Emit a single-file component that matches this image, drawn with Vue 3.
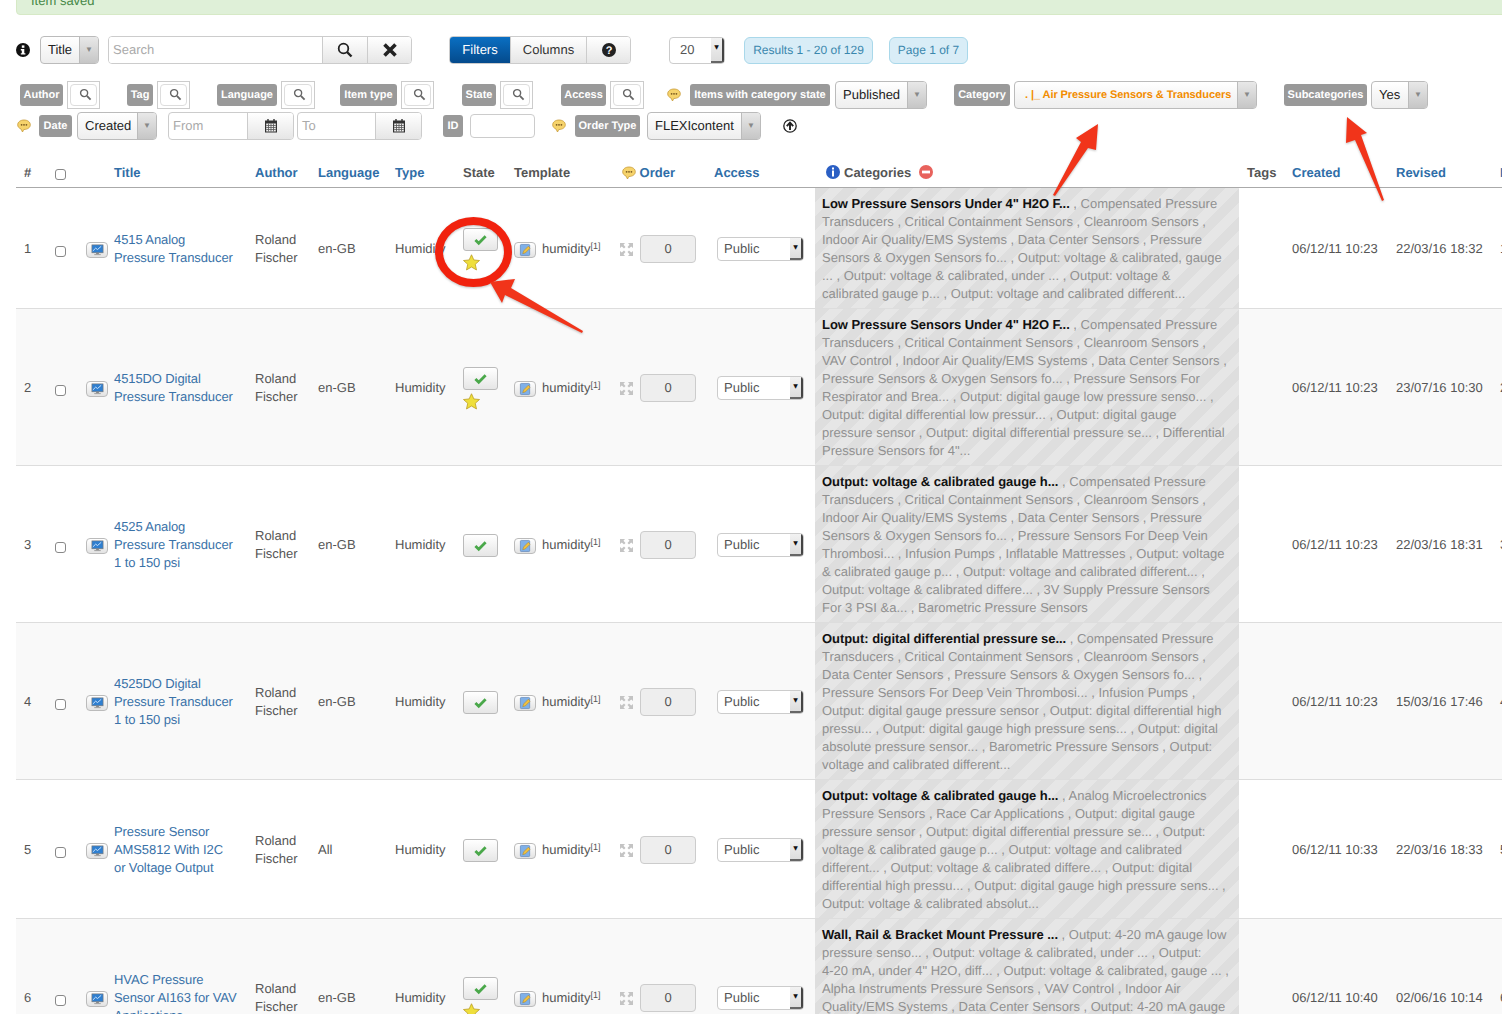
<script setup>
const row2 = [
  { t: 'label', text: 'Author', w: 43, ml: 4 }, { t: 'sbox', w: 33, ml: 4 },
  { t: 'label', text: 'Tag', w: 26, ml: 27 }, { t: 'sbox', w: 33, ml: 4 },
  { t: 'label', text: 'Language', w: 60, ml: 27 }, { t: 'sbox', w: 34, ml: 4 },
  { t: 'label', text: 'Item type', w: 57, ml: 25 }, { t: 'sbox', w: 33, ml: 4 },
  { t: 'label', text: 'State', w: 34, ml: 28 }, { t: 'sbox', w: 33, ml: 4 },
  { t: 'label', text: 'Access', w: 45, ml: 28 }, { t: 'sbox', w: 34, ml: 4 },
  { t: 'chat', w: 14, ml: 23 },
  { t: 'label', text: 'Items with category state', w: 140, ml: 9 },
  { t: 'sel', text: 'Published', w: 92, ml: 5 },
  { t: 'label', text: 'Category', w: 56, ml: 27 },
  { t: 'sel', text: '. |_ Air Pressure Sensors & Transducers', w: 243, ml: 4, cat: true },
  { t: 'label', text: 'Subcategories', w: 83, ml: 27 },
  { t: 'sel', text: 'Yes', w: 57, ml: 4 }
]
const row3 = [
  { t: 'chat', w: 14, ml: 1 },
  { t: 'label', text: 'Date', w: 33, ml: 8 },
  { t: 'sel', text: 'Created', w: 80, ml: 5 },
  { t: 'date', text: 'From', w: 126, ml: 11 },
  { t: 'date', text: 'To', w: 125, ml: 3 },
  { t: 'label', text: 'ID', w: 20, ml: 21 },
  { t: 'input', w: 65, ml: 7 },
  { t: 'chat', w: 14, ml: 17 },
  { t: 'label', text: 'Order Type', w: 65, ml: 9 },
  { t: 'sel', text: 'FLEXIcontent', w: 114, ml: 7 },
  { t: 'up', w: 14, ml: 22 }
]
const rows = [
  { n: 1, title: ['4515 Analog', 'Pressure Transducer'], lang: 'en-GB', star: true, created: '06/12/11 10:23', revised: '22/03/16 18:32',
    bold: 'Low Pressure Sensors Under 4" H2O F...',
    rest: ' , Compensated Pressure Transducers , Critical Containment Sensors , Cleanroom Sensors , Indoor Air Quality/EMS Systems , Data Center Sensors , Pressure Sensors & Oxygen Sensors fo... , Output: voltage & calibrated, gauge ... , Output: voltage & calibrated, under ... , Output: voltage & calibrated gauge p... , Output: voltage and calibrated different...' },
  { n: 2, title: ['4515DO Digital', 'Pressure Transducer'], lang: 'en-GB', star: true, created: '06/12/11 10:23', revised: '23/07/16 10:30',
    bold: 'Low Pressure Sensors Under 4" H2O F...',
    rest: ' , Compensated Pressure Transducers , Critical Containment Sensors , Cleanroom Sensors , VAV Control , Indoor Air Quality/EMS Systems , Data Center Sensors , Pressure Sensors & Oxygen Sensors fo... , Pressure Sensors For Respirator and Brea... , Output: digital gauge low pressure senso... , Output: digital differential low pressur... , Output: digital gauge pressure sensor , Output: digital differential pressure se... , Differential Pressure Sensors for 4"...' },
  { n: 3, title: ['4525 Analog', 'Pressure Transducer', '1 to 150 psi'], lang: 'en-GB', star: false, created: '06/12/11 10:23', revised: '22/03/16 18:31',
    bold: 'Output: voltage & calibrated gauge h...',
    rest: ' , Compensated Pressure Transducers , Critical Containment Sensors , Cleanroom Sensors , Indoor Air Quality/EMS Systems , Data Center Sensors , Pressure Sensors & Oxygen Sensors fo... , Pressure Sensors For Deep Vein Thrombosi... , Infusion Pumps , Inflatable Mattresses , Output: voltage & calibrated gauge p... , Output: voltage and calibrated different... , Output: voltage & calibrated differe... , 3V Supply Pressure Sensors For 3 PSI &a... , Barometric Pressure Sensors' },
  { n: 4, title: ['4525DO Digital', 'Pressure Transducer', '1 to 150 psi'], lang: 'en-GB', star: false, created: '06/12/11 10:23', revised: '15/03/16 17:46',
    bold: 'Output: digital differential pressure se...',
    rest: ' , Compensated Pressure Transducers , Critical Containment Sensors , Cleanroom Sensors , Data Center Sensors , Pressure Sensors & Oxygen Sensors fo... , Pressure Sensors For Deep Vein Thrombosi... , Infusion Pumps , Output: digital gauge pressure sensor , Output: digital differential high pressu... , Output: digital gauge high pressure sens... , Output: digital absolute pressure sensor... , Barometric Pressure Sensors , Output: voltage and calibrated different...' },
  { n: 5, title: ['Pressure Sensor', 'AMS5812 With I2C', 'or Voltage Output'], lang: 'All', star: false, created: '06/12/11 10:33', revised: '22/03/16 18:33',
    bold: 'Output: voltage & calibrated gauge h...',
    rest: ' , Analog Microelectronics Pressure Sensors , Race Car Applications , Output: digital gauge pressure sensor , Output: digital differential pressure se... , Output: voltage & calibrated gauge p... , Output: voltage and calibrated different... , Output: voltage & calibrated differe... , Output: digital differential high pressu... , Output: digital gauge high pressure sens... , Output: voltage & calibrated absolut...' },
  { n: 6, title: ['HVAC Pressure', 'Sensor AI163 for VAV', 'Applications'], lang: 'en-GB', star: true, created: '06/12/11 10:40', revised: '02/06/16 10:14',
    bold: 'Wall, Rail & Bracket Mount Pressure ...',
    rest: ' , Output: 4-20 mA gauge low pressure senso... , Output: voltage & calibrated, under ... , Output: 4-\u206020 mA, under 4" H2O, diff... , Output: voltage & calibrated, gauge ... , Alpha Instruments Pressure Sensors , VAV Control , Indoor Air Quality/EMS Systems , Data Center Sensors , Output: 4-20 mA gauge pressure sensor , Output: voltage and calibrated different... , Output: voltage & calibrated differe... , Barometric Pressure Sensors , Output: voltage & calibrated' }
]
</script>

<template>
  <div class="page">
    <div class="alert">Item saved</div>

    <div class="bar bar1">
      <svg class="ico14" viewBox="0 0 14 14"><circle cx="7" cy="7" r="7" fill="#111"/><rect x="5.800" y="2.400" width="2.600" height="2.400" fill="#fff"/><path d="M4.800 6h3.500v4.200h1.100v1.400H4.800v-1.400h1V7.400h-1z" fill="#fff"/></svg>
      <div class="sel title-sel"><span class="sel-text">Title</span><span class="sel-arrow">▼</span></div>
      <div class="group search-group">
        <span class="search-ph">Search</span>
        <span class="btn w45"><svg class="ico16" viewBox="0 0 16 16"><circle cx="6.500" cy="6.500" r="4.800" fill="none" stroke="#222" stroke-width="1.800"/><path d="M10 10l4.500 4.500" stroke="#222" stroke-width="2.400"/></svg></span>
        <span class="btn w44"><svg class="ico16" viewBox="0 0 16 16"><path d="M2.500 2.500l11 11M13.500 2.500l-11 11" stroke="#222" stroke-width="3.600"/></svg></span>
      </div>
      <div class="group filter-group">
        <span class="btn primary w60">Filters</span>
        <span class="btn w76">Columns</span>
        <span class="btn w46"><svg class="ico14" viewBox="0 0 14 14"><circle cx="7" cy="7" r="7" fill="#222"/><text x="7" y="11" text-anchor="middle" class="q">?</text></svg></span>
      </div>
      <div class="native limit"><span>20</span><i class="native-arrow">▼</i></div>
      <span class="info results">Results 1 - 20 of 129</span>
      <span class="info pagei">Page 1 of 7</span>
    </div>

    <div v-for="(list, li) in [row2, row3]" :key="li" class="bar" :class="li ? 'bar3' : 'bar2'">
      <template v-for="(it, i) in list" :key="i">
        <span v-if="it.t === 'label'" class="label" :style="{ width: it.w + 'px', marginLeft: it.ml + 'px' }">{{ it.text }}</span>
        <span v-else-if="it.t === 'sbox'" class="sbox" :style="{ width: it.w + 'px', marginLeft: it.ml + 'px' }">
          <span class="sbox-in"><svg class="ico13" viewBox="0 0 14 14"><circle cx="5.500" cy="5.500" r="3.800" fill="none" stroke="#666" stroke-width="1.500"/><path d="M8.500 8.500l4 4" stroke="#666" stroke-width="2"/></svg></span>
        </span>
        <svg v-else-if="it.t === 'chat'" class="chat" :style="{ marginLeft: it.ml + 'px' }" viewBox="0 0 14 14"><path d="M7 1C3.400 1 .7 3 .7 5.800c0 2 1.300 3.400 3.300 4.200l1.500 3 1.300-2.500c3.800 0 6.500-2 6.500-4.700C13.300 3 10.600 1 7 1z" fill="#f6d36b" stroke="#c79a3a" stroke-width=".8"/><circle cx="4.600" cy="5.800" r=".9" fill="#7a5a20"/><circle cx="7" cy="5.800" r=".9" fill="#7a5a20"/><circle cx="9.400" cy="5.800" r=".9" fill="#7a5a20"/></svg>
        <div v-else-if="it.t === 'sel'" class="sel" :style="{ width: it.w + 'px', marginLeft: it.ml + 'px' }"><span class="sel-text" :class="{ cat: it.cat }">{{ it.text }}</span><span class="sel-arrow">▼</span></div>
        <div v-else-if="it.t === 'date'" class="date" :style="{ width: it.w + 'px', marginLeft: it.ml + 'px' }">
          <span class="date-ph">{{ it.text }}</span>
          <span class="date-btn"><svg class="ico14" viewBox="0 0 14 14"><rect x="1" y="1.500" width="12" height="12" fill="#333"/><rect x="2.200" y="4.500" width="9.600" height="8" fill="#eee"/><path d="M2.200 6.500h9.600M2.200 8.500h9.600M2.200 10.500h9.600M4.500 4.500v8M7 4.500v8M9.500 4.500v8" stroke="#555" stroke-width=".8"/><path d="M4 0v3M10 0v3" stroke="#333" stroke-width="1.400"/></svg></span>
        </div>
        <span v-else-if="it.t === 'input'" class="plain-input" :style="{ width: it.w + 'px', marginLeft: it.ml + 'px' }"></span>
        <svg v-else class="ico14" :style="{ marginLeft: it.ml + 'px' }" viewBox="0 0 14 14"><circle cx="7" cy="7" r="6.200" fill="none" stroke="#222" stroke-width="1.300"/><path d="M7 11V4M3.800 7.200L7 3.600l3.200 3.600" fill="none" stroke="#222" stroke-width="1.900"/></svg>
      </template>
    </div>

    <table class="grid">
      <colgroup>
        <col class="c31"><col class="c31"><col class="c169"><col class="c63"><col class="c77"><col class="c68"><col class="c51"><col class="c105"><col class="c98"><col class="c106"><col class="c424"><col class="c45"><col class="c104"><col class="c104"><col class="c100">
      </colgroup>
      <thead>
        <tr>
          <th class="dark">#</th>
          <th><span class="cb"></span></th>
          <th class="th-title">Title</th>
          <th>Author</th>
          <th>Language</th>
          <th>Type</th>
          <th class="dark">State</th>
          <th class="dark">Template</th>
          <th class="th-order"><svg class="chat" viewBox="0 0 14 14"><path d="M7 1C3.400 1 .7 3 .7 5.800c0 2 1.300 3.400 3.300 4.200l1.500 3 1.300-2.500c3.800 0 6.500-2 6.500-4.700C13.300 3 10.600 1 7 1z" fill="#f6d36b" stroke="#c79a3a" stroke-width=".8"/><circle cx="4.600" cy="5.800" r=".9" fill="#7a5a20"/><circle cx="7" cy="5.800" r=".9" fill="#7a5a20"/><circle cx="9.400" cy="5.800" r=".9" fill="#7a5a20"/></svg> Order</th>
          <th class="th-access">Access</th>
          <th class="dark th-cat">
            <svg class="ico14" viewBox="0 0 14 14"><circle cx="7" cy="7" r="7" fill="#2b5fc4"/><rect x="6" y="2.500" width="2" height="2" fill="#fff"/><rect x="6" y="5.500" width="2" height="6" fill="#fff"/></svg>
            <span class="cat-word">Categories</span>
            <svg class="ico14" viewBox="0 0 14 14"><circle cx="7" cy="7" r="7" fill="#e8625c"/><rect x="3" y="5.600" width="8" height="2.800" fill="#fff"/></svg>
          </th>
          <th class="dark">Tags</th>
          <th>Created</th>
          <th>Revised</th>
          <th>ID</th>
        </tr>
      </thead>
      <tbody>
        <tr v-for="r in rows" :key="r.n">
          <td>{{ r.n }}</td>
          <td><span class="cb"></span></td>
          <td>
            <div class="title-cell">
              <span class="mini"><svg viewBox="0 0 14 12" class="mini-ico"><rect x="1" y="0.500" width="12" height="8.500" fill="#2f7fd0" stroke="#777" stroke-width=".7"/><path d="M2 7l3-3 2 1.500L11 2" stroke="#cfe6ff" fill="none"/><rect x="5.500" y="9" width="3" height="1.500" fill="#888"/><rect x="3.500" y="10.500" width="7" height="1" fill="#999"/></svg></span>
              <a class="link"><template v-for="(l, i) in r.title" :key="i">{{ l }}<br></template></a>
            </div>
          </td>
          <td>Roland Fischer</td>
          <td>{{ r.lang }}</td>
          <td>Humidity</td>
          <td>
            <span class="state-btn"><svg class="ico13" viewBox="0 0 14 14"><path d="M1.500 7.500l3.600 3.500L12.500 3.500" fill="none" stroke="#4aa84a" stroke-width="3"/></svg></span>
            <svg v-if="r.star" class="star" viewBox="0 0 18 18"><path d="M9 .8l2.500 5.500 6 .6-4.500 4 1.300 6L9 13.800 3.700 16.900l1.300-6-4.500-4 6-.6z" fill="#efdf3c" stroke="#b99a1e" stroke-width=".8"/></svg>
          </td>
          <td>
            <div class="tpl-cell">
              <span class="mini"><svg viewBox="0 0 14 14" class="mini-ico tall"><rect x="1.500" y="1" width="10" height="12" rx="1" fill="#7fb0e8" stroke="#5a7fb0" stroke-width=".7"/><path d="M4 11l1-3 5-5 2 2-5 5z" fill="#f0c040" stroke="#a88020" stroke-width=".5"/></svg></span>
              <span>humidity<sup>[1]</sup></span>
            </div>
          </td>
          <td>
            <div class="order-cell">
              <svg class="drag" viewBox="0 0 15 15"><path d="M1 1h5L4.500 2.800 6.500 5 5 6.500 2.800 4.500 1 6zM14 1v5l-1.800-1.500L10 6.500 8.500 5l2-2.200L9 1zM1 14V9l1.800 1.500L5 8.500 6.500 10l-2 2.200L6 14zM14 14H9l1.500-1.800L8.500 10 10 8.500l2.200 2L14 9z" fill="#c4c4c4"/></svg>
              <span class="order-input">0</span>
            </div>
          </td>
          <td><div class="native pub"><span>Public</span><i class="native-arrow">▼</i></div></td>
          <td class="cats"><b>{{ r.bold }}</b>{{ r.rest }}</td>
          <td></td>
          <td>{{ r.created }}</td>
          <td>{{ r.revised }}</td>
          <td>{{ r.n }}</td>
        </tr>
      </tbody>
    </table>

    <svg class="marks" viewBox="0 0 1502 1014">
      <ellipse cx="473.500" cy="252" rx="34.500" ry="31" fill="none" stroke="#f1220e" stroke-width="8"/>
      <path d="M490 282L515 279 511 288 583 331 582 333 505 295 502 303z" fill="#f1341a"/>
      <path d="M1098 124L1076 138 1081 142 1053 195 1055 196 1088 148 1096 150z" fill="#f1341a"/>
      <path d="M1347 117L1346 143 1355 140 1382 201 1384 200 1361 135 1367 133z" fill="#f1341a"/>
    </svg>
  </div>
</template>

<style>
html, body { margin: 0; overflow: hidden; background: #fff; }
</style>

<style scoped>
.page { position: relative; width: 1502px; height: 1014px; overflow: hidden; padding-left: 16px; box-sizing: border-box; font: 13px/18px "Liberation Sans", Arial, sans-serif; color: #555; text-rendering: geometricPrecision; }
.alert { margin-top: -21px; height: 36px; width: 1520px; box-sizing: border-box; padding: 12px 14px; background: #dff0d8; border: 1px solid #d6e9c6; border-radius: 4px; color: #468847; }
.bar { display: flex; align-items: center; height: 28px; }
.bar1 { margin-top: 21px; }
.bar2 { margin-top: 17px; }
.bar3 { margin-top: 3px; }
.ico14 { width: 14px; height: 14px; flex: none; vertical-align: -2px; }
.ico16 { width: 16px; height: 16px; }
.ico13 { width: 13px; height: 13px; }
.chat { width: 14px; height: 14px; flex: none; vertical-align: -3px; }
.q { font: bold 11px "Liberation Sans", sans-serif; fill: #fff; }
.sel { display: flex; height: 28px; box-sizing: border-box; border: 1px solid #bbb; border-radius: 4px; background: linear-gradient(#fff, #eee); overflow: hidden; flex: none; color: #222; }
.title-sel { width: 59px; margin-left: 10px; }
.sel-text { flex: 1; padding-left: 7px; line-height: 26px; white-space: nowrap; overflow: hidden; }
.cat { color: #f28c00; font-size: 11px; font-weight: bold; padding-left: 10px; letter-spacing: -.08px; }
.sel-arrow { width: 18px; flex: none; border-left: 1px solid #bbb; background: linear-gradient(#e8e8e8, #c6c6c6); color: #888; font-size: 8px; line-height: 26px; text-align: center; }
.group { display: flex; flex: none; height: 28px; box-sizing: border-box; border: 1px solid #ccc; border-radius: 4px; overflow: hidden; }
.search-group { width: 304px; margin-left: 9px; }
.search-ph { flex: 1; padding-left: 4px; line-height: 26px; color: #aaa; background: #fff; }
.filter-group { width: 182px; margin-left: 37px; }
.btn { display: flex; align-items: center; justify-content: center; flex: none; box-sizing: border-box; border-left: 1px solid #ccc; background: linear-gradient(#fff, #e6e6e6); color: #333; }
.w45 { width: 45px; } .w44 { width: 44px; } .w76 { width: 76px; } .w46 { width: 44px; }
.w60 { width: 60px; border-left: 0; }
.primary { background: linear-gradient(#0a6fc2, #044a8c); color: #fff; }
.native { display: flex; align-items: center; justify-content: space-between; box-sizing: border-box; border: 1px solid #ccc; border-radius: 4px; background: #fff; flex: none; color: #555; padding-left: 6px; position: relative; overflow: hidden; }
.limit { width: 56px; height: 27px; margin-left: 38px; padding-left: 10px; }
.pub { width: 87px; height: 24px; }
.native-arrow { width: 13px; height: 100%; box-sizing: border-box; border-right: 2px solid #444; border-bottom: 2px solid #666; background: linear-gradient(#f2f2f2, #ddd); color: #111; font: normal 6px/20px "DejaVu Sans", sans-serif; text-align: center; }
.info { flex: none; box-sizing: border-box; height: 27px; line-height: 25px; border: 1px solid #a9d8ea; border-radius: 6px; background: #d9edf7; color: #3a87ad; font-size: 12px; text-align: center; }
.results { width: 129px; margin-left: 19px; }
.pagei { width: 79px; margin-left: 16px; }
.label { flex: none; box-sizing: border-box; height: 22px; line-height: 22px; background: #999; border-radius: 3px; color: #fff; font-size: 11px; font-weight: bold; text-align: center; white-space: nowrap; overflow: hidden; }
.sbox { flex: none; box-sizing: border-box; height: 28px; padding: 2px; border: 1px solid #ccc; }
.sbox-in { display: flex; align-items: center; justify-content: center; height: 100%; border: 1px solid #ddd; border-radius: 4px; box-sizing: border-box; padding-left: 3px; padding-bottom: 2px; }
.date { display: flex; flex: none; height: 28px; box-sizing: border-box; border: 1px solid #ccc; border-radius: 4px; overflow: hidden; }
.date-ph { flex: 1; padding-left: 4px; line-height: 26px; color: #aaa; }
.date-btn { width: 45px; display: flex; align-items: center; justify-content: center; border-left: 1px solid #ccc; background: linear-gradient(#fff, #e6e6e6); }
.plain-input { flex: none; height: 24px; border: 1px solid #ccc; border-radius: 4px; box-sizing: border-box; }
.grid { margin-top: 19px; width: 1576px; table-layout: fixed; border-collapse: separate; border-spacing: 0; }
.c31 { width: 31px; } .c169 { width: 169px; } .c63 { width: 63px; } .c77 { width: 77px; } .c68 { width: 68px; } .c51 { width: 51px; } .c105 { width: 105px; } .c98 { width: 98px; } .c106 { width: 106px; } .c424 { width: 424px; } .c45 { width: 45px; } .c104 { width: 104px; } .c100 { width: 100px; }
th { height: 27px; box-sizing: content-box; padding: 0 0 1px 8px; border-bottom: 1px solid #aaa; text-align: left; color: #2f6ea8; font-weight: bold; white-space: nowrap; }
th.dark { color: #555; }
.th-title { padding-left: 36px; }
.th-order { padding-left: 11px; }
.th-access { padding-left: 5px; }
.th-cat { padding-left: 11px; }
.cat-word { margin: 0 8px 0 4px; }
td { padding: 2px 0 0 8px; border-bottom: 1px solid #ddd; vertical-align: middle; }
tbody tr:nth-child(even) { background: #f9f9f9; }
.cb { display: inline-block; width: 11px; height: 11px; box-sizing: border-box; border: 1px solid #888; border-radius: 3px; background: #fff; vertical-align: middle; margin-top: 3px; }
.title-cell, .tpl-cell { display: flex; align-items: center; gap: 6px; }
.mini { display: flex; align-items: center; justify-content: center; flex: none; width: 22px; height: 16px; margin-top: 2px; box-sizing: border-box; border: 1px solid #bbb; border-radius: 4px; background: linear-gradient(#fff, #e3e3e3); }
.mini-ico { width: 13px; height: 12px; }
.tall { height: 14px; }
.link { color: #3a72a8; letter-spacing: -.1px; }
.state-btn { display: flex; align-items: center; justify-content: center; width: 35px; height: 23px; box-sizing: border-box; border: 1px solid #bbb; border-radius: 3px; background: linear-gradient(#fff, #e6e6e6); }
.star { display: block; width: 17px; height: 17px; margin-top: 3px; }
sup { font-size: 9px; line-height: 0; vertical-align: 4px; }
.order-cell { display: flex; align-items: center; gap: 6px; }
.drag { width: 15px; height: 15px; flex: none; }
.order-input { width: 56px; height: 28px; line-height: 26px; box-sizing: border-box; border: 1px solid #ccc; border-radius: 4px; background: #eee; text-align: center; }
td.cats { padding: 7px 10px 5px 7px; color: #909090; background: repeating-linear-gradient(135deg, #dedede 0 10px, #e6e6e6 10px 20px); }
.cats b { color: #111; letter-spacing: -.05px; }
.marks { position: absolute; left: 0; top: 0; width: 1502px; height: 1014px; pointer-events: none; filter: drop-shadow(0 1px 1px rgba(0,0,0,.25)); }
</style>
